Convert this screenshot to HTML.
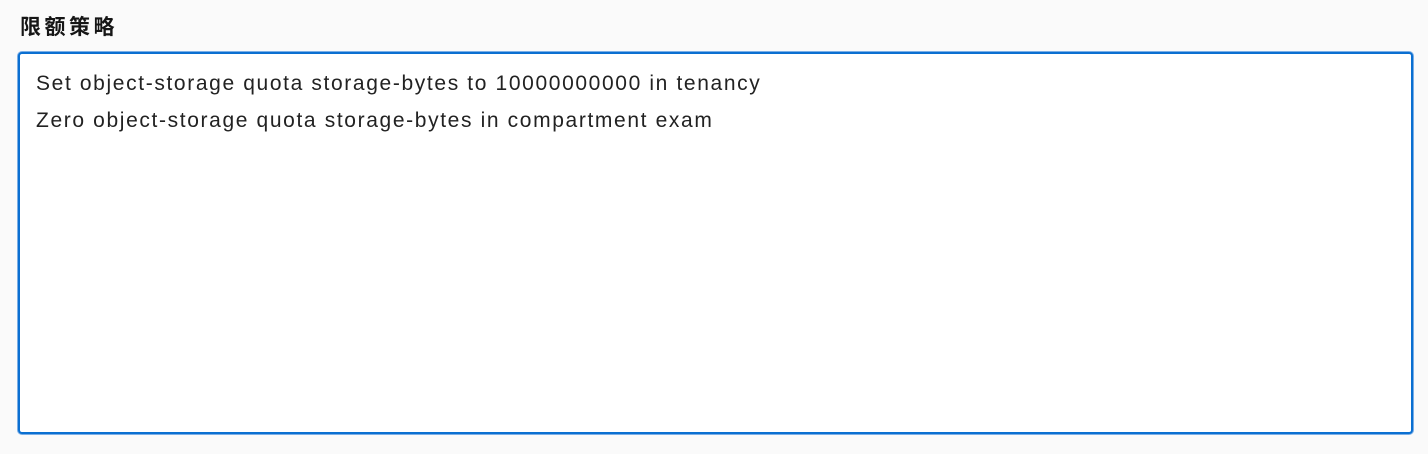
<html><head><style>
body{margin:0;background:#fafafa;width:1428px;height:454px;overflow:hidden;font-family:"Liberation Sans","Noto Sans CJK SC",sans-serif}
.l{position:absolute;left:20px;top:14px;font-size:21px;font-weight:bold;color:#161616;line-height:28px;letter-spacing:3.5px}
.t{position:absolute;left:18px;top:52px;width:1391px;height:378px;background:#fff;border:2px solid #0a6fd1;border-radius:4px;box-shadow:0 0 0 1px #7aaee6}
.t div{position:absolute;left:16px;top:11px;font-size:21px;line-height:37px;color:#222;letter-spacing:1.63px;white-space:nowrap}
</style></head><body>
<div class="l">限额策略</div>
<div class="t"><div>Set object-storage quota storage-bytes to 10000000000 in tenancy<br>Zero object-storage quota storage-bytes in compartment exam</div></div>
</body></html>
